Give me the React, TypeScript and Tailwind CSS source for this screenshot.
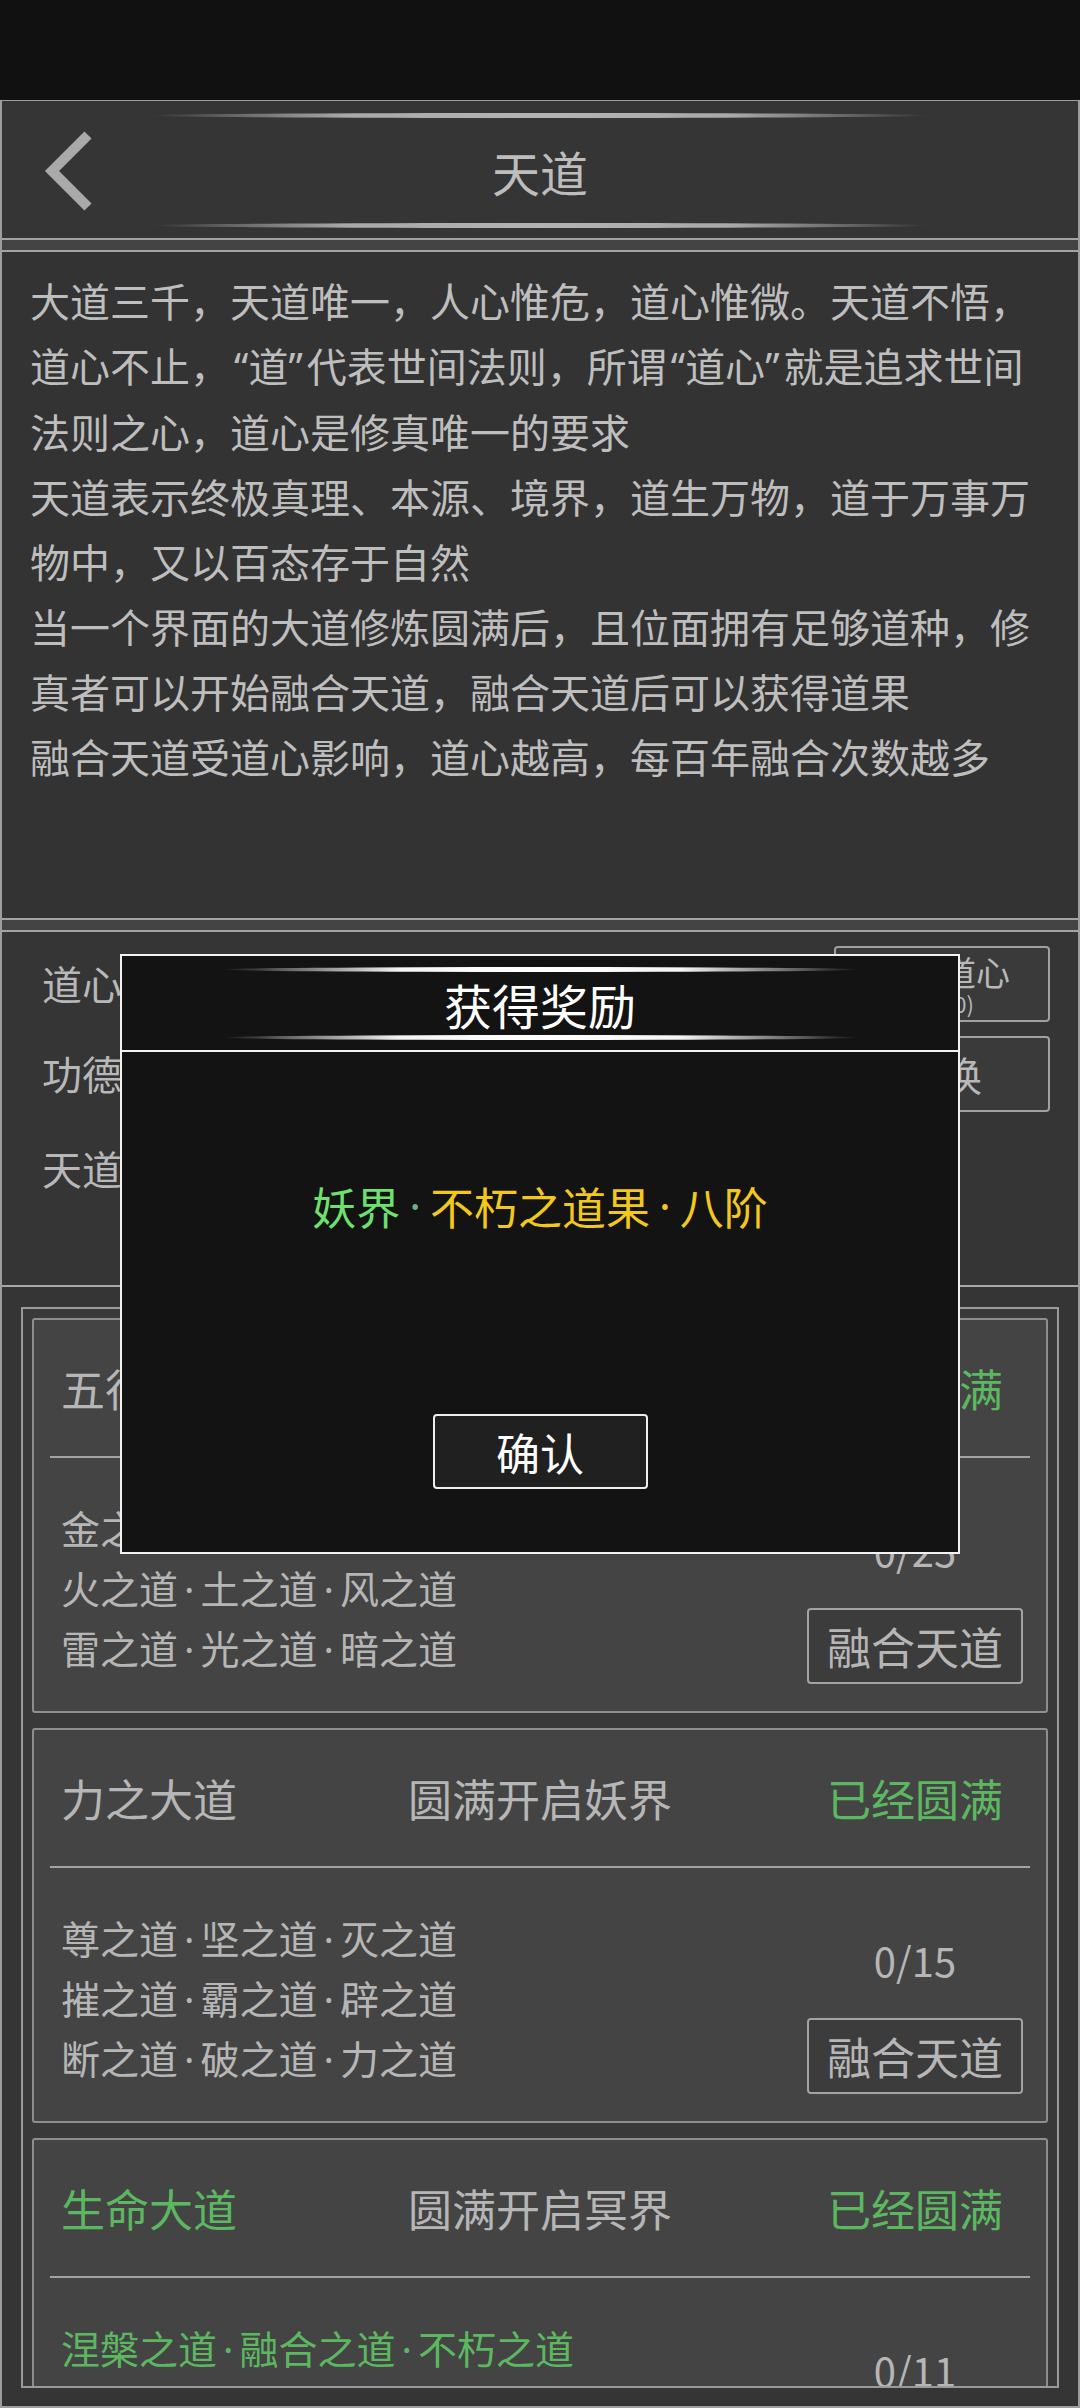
import React from 'react';

const FONT = "font-['Noto_Sans_CJK_SC','Noto_Sans',sans-serif]";
const LATIN = "font-['Noto_Sans',sans-serif]";

const descLines = [
  '大道三千，天道唯一，人心惟危，道心惟微。天道不悟，',
  '道心不止，“道”代表世间法则，所谓“道心”就是追求世间',
  '法则之心，道心是修真唯一的要求',
  '天道表示终极真理、本源、境界，道生万物，道于万事万',
  '物中，又以百态存于自然',
  '当一个界面的大道修炼圆满后，且位面拥有足够道种，修',
  '真者可以开始融合天道，融合天道后可以获得道果',
  '融合天道受道心影响，道心越高，每百年融合次数越多',
];

interface Dao {
  title: string;
  realm: string;
  items: string[][];
  count: string;
  done: boolean;
}

const daos: Dao[] = [
  {
    title: '五行大道',
    realm: '圆满开启人界',
    items: [
      ['金之道', '木之道', '水之道'],
      ['火之道', '土之道', '风之道'],
      ['雷之道', '光之道', '暗之道'],
    ],
    count: '0/25',
    done: false,
  },
  {
    title: '力之大道',
    realm: '圆满开启妖界',
    items: [
      ['尊之道', '坚之道', '灭之道'],
      ['摧之道', '霸之道', '辟之道'],
      ['断之道', '破之道', '力之道'],
    ],
    count: '0/15',
    done: false,
  },
  {
    title: '生命大道',
    realm: '圆满开启冥界',
    items: [['涅槃之道', '融合之道', '不朽之道']],
    count: '0/11',
    done: true,
  },
];

// quotes in the CJK font are full width; the game draws them narrow
function Desc({ text }: { text: string }) {
  const parts = text.split(/([“”])/);
  return (
    <>
      {parts.map((p, i) =>
        p === '“' || p === '”' ? (
          <span key={i} className={`${LATIN} ${p === '“' ? 'pl-[4px]' : 'pr-[4px]'}`}>{p}</span>
        ) : (
          <React.Fragment key={i}>{p}</React.Fragment>
        )
      )}
    </>
  );
}

// thin lens-shaped highlight used above / below titles
function Glow({ w, white }: { w: string; white?: boolean }) {
  return (
    <div
      className={`${w} h-[5px] rounded-[50%] ${
        white
          ? 'bg-[linear-gradient(90deg,transparent,#f4f4f4_28%,#ffffff_50%,#f4f4f4_72%,transparent)]'
          : 'bg-[linear-gradient(90deg,transparent,#a8a8a8_25%,#b4b4b4_50%,#a8a8a8_75%,transparent)]'
      }`}
    />
  );
}

function Band() {
  return <div className="h-[14px] shrink-0 border-y-2 border-[#a3a3a3] bg-[#444444]" />;
}

function Dot({ cls = 'mx-[6px]' }: { cls?: string }) {
  return <span className={`${LATIN} ${cls}`}>·</span>;
}

function DotJoin({ parts }: { parts: string[] }) {
  return (
    <>
      {parts.map((p, i) => (
        <React.Fragment key={i}>
          {i > 0 && <Dot />}
          {p}
        </React.Fragment>
      ))}
    </>
  );
}

function DaoCard({ dao }: { dao: Dao }) {
  const green = 'text-[#5cb860]';
  const gray = 'text-[#b6b6b6]';
  return (
    <div className="h-[395px] shrink-0 rounded-[3px] border-2 border-[#8e8e8e] bg-[#444444] flex flex-col">
      <div className="h-[136px] grid grid-cols-3 items-center text-[44px] leading-none">
        <div className={`pl-[27px] ${dao.done ? green : gray}`}>{dao.title}</div>
        <div className={`text-center ${gray}`}>{dao.realm}</div>
        <div className={`text-right pr-[43px] ${green}`}>已经圆满</div>
      </div>
      <div className="mx-[16px] h-[2px] bg-[#a3a3a3]" />
      <div className="flex-1 flex justify-between">
        <div className={`pl-[27px] pt-[40px] text-[39px] leading-[59px] ${dao.done ? green : gray}`}>
          {dao.items.map((row, i) => (
            <div key={i} className="whitespace-nowrap">
              <DotJoin parts={row} />
            </div>
          ))}
        </div>
        <div className="w-[216px] mr-[23px] pt-[67px] flex flex-col items-center">
          <div className={`h-[50px] leading-[50px] text-[40px] ${gray}`}>{dao.count}</div>
          <button className="mt-[33px] w-[216px] h-[76px] rounded-[4px] border-2 border-[#a3a3a3] bg-[#3c3c3c] text-[44px] leading-none text-[#b6b6b6]">
            融合天道
          </button>
        </div>
      </div>
    </div>
  );
}

export default function App() {
  return (
    <div className={`relative w-[1080px] h-[2408px] overflow-hidden bg-[#111111] ${FONT}`}>
      {/* status bar */}
      <div className="h-[100px] bg-[#111111]" />

      <div className="h-[2308px] flex flex-col border-t border-x-2 border-b-2 border-[#9e9e9e] bg-[#353535]">
        {/* header */}
        <div className="h-[137px] shrink-0 flex flex-col items-center pt-[12px]">
          <Glow w="w-[780px]" />
          <div className="w-full h-[105px] grid grid-cols-[1fr_auto_1fr] items-center">
            <div className="pl-[38px]">
              <svg width="60" height="90" viewBox="0 0 60 90">
                <polyline points="48,9 12,45 48,81" fill="none" stroke="#a9a9a9" strokeWidth="10" />
              </svg>
            </div>
            <div className="text-[48px] leading-none text-[#bdbdbd]">天道</div>
            <div />
          </div>
          <Glow w="w-[780px]" />
        </div>

        <Band />

        {/* description */}
        <div className="h-[666px] shrink-0 bg-[#333333] pl-[28px] pt-[16px] text-[40px] leading-[65px] text-[#bebebe]">
          {descLines.map((l, i) => (
            <div key={i} className="whitespace-nowrap"><Desc text={l} /></div>
          ))}
        </div>

        <Band />

        {/* stats */}
        <div className="h-[353px] shrink-0 flex justify-between">
          <div className="pl-[40px] pt-[28px] text-[40px] leading-[46px] text-[#b8b8b8]">
            <div>道心：1260</div>
            <div className="mt-[44px]">功德：3580</div>
            <div className="mt-[49px]">天道：未融合</div>
          </div>
          <div className="pr-[28px] pt-[14px] flex flex-col gap-[14px]">
            <button className="w-[216px] h-[76px] rounded-[4px] border-2 border-[#a0a0a0] bg-[#3a3a3a] flex flex-col items-center justify-center text-[#b8b8b8]">
              <span className="text-[34px] leading-[38px]">提升道心</span>
              <span className="text-[22px] leading-[24px]">(1000)</span>
            </button>
            <button className="w-[216px] h-[76px] rounded-[4px] border-2 border-[#a0a0a0] bg-[#3a3a3a] text-[40px] leading-none text-[#b8b8b8]">
              兑换
            </button>
          </div>
        </div>

        <div className="h-[2px] shrink-0 bg-[#a8a8a8]" />

        {/* dao list */}
        <div className="flex-1 px-[19px] pt-[20px] pb-[18px]">
          <div className="h-[1081px] overflow-hidden border-2 border-[#9a9a9a] bg-[#393939] p-[9px] flex flex-col gap-[15px]">
            {daos.map((d, i) => (
              <DaoCard key={i} dao={d} />
            ))}
          </div>
        </div>
      </div>

      {/* reward dialog */}
      <div className="absolute left-[120px] top-[954px] w-[840px] h-[600px] border-2 border-[#f2f2f2] bg-[#131313] flex flex-col">
        <div className="flex flex-col items-center pt-[11px] pb-[10px] border-b-2 border-[#f2f2f2]">
          <Glow w="w-[637px]" white />
          <div className="h-[63px] flex items-center text-[48px] leading-none text-white">获得奖励</div>
          <Glow w="w-[637px]" white />
        </div>
        <div className="flex-1 flex flex-col items-center pt-[124px]">
          <div className="h-[60px] flex items-center text-[44px] leading-none whitespace-nowrap">
            <span className="text-[#6ee06e]">妖界</span>
            <Dot cls="mx-[9px] text-[#6fb080]" />
            <span className="text-[#f2c81c]">不朽之道果</span>
            <Dot cls="mx-[9px] text-[#f2c81c]" />
            <span className="text-[#f2c81c]">八阶</span>
          </div>
          <button className="mt-[178px] w-[215px] h-[75px] rounded-[4px] border-2 border-[#eeeeee] bg-[#202020] text-[44px] leading-none text-white">
            确认
          </button>
        </div>
      </div>
    </div>
  );
}
